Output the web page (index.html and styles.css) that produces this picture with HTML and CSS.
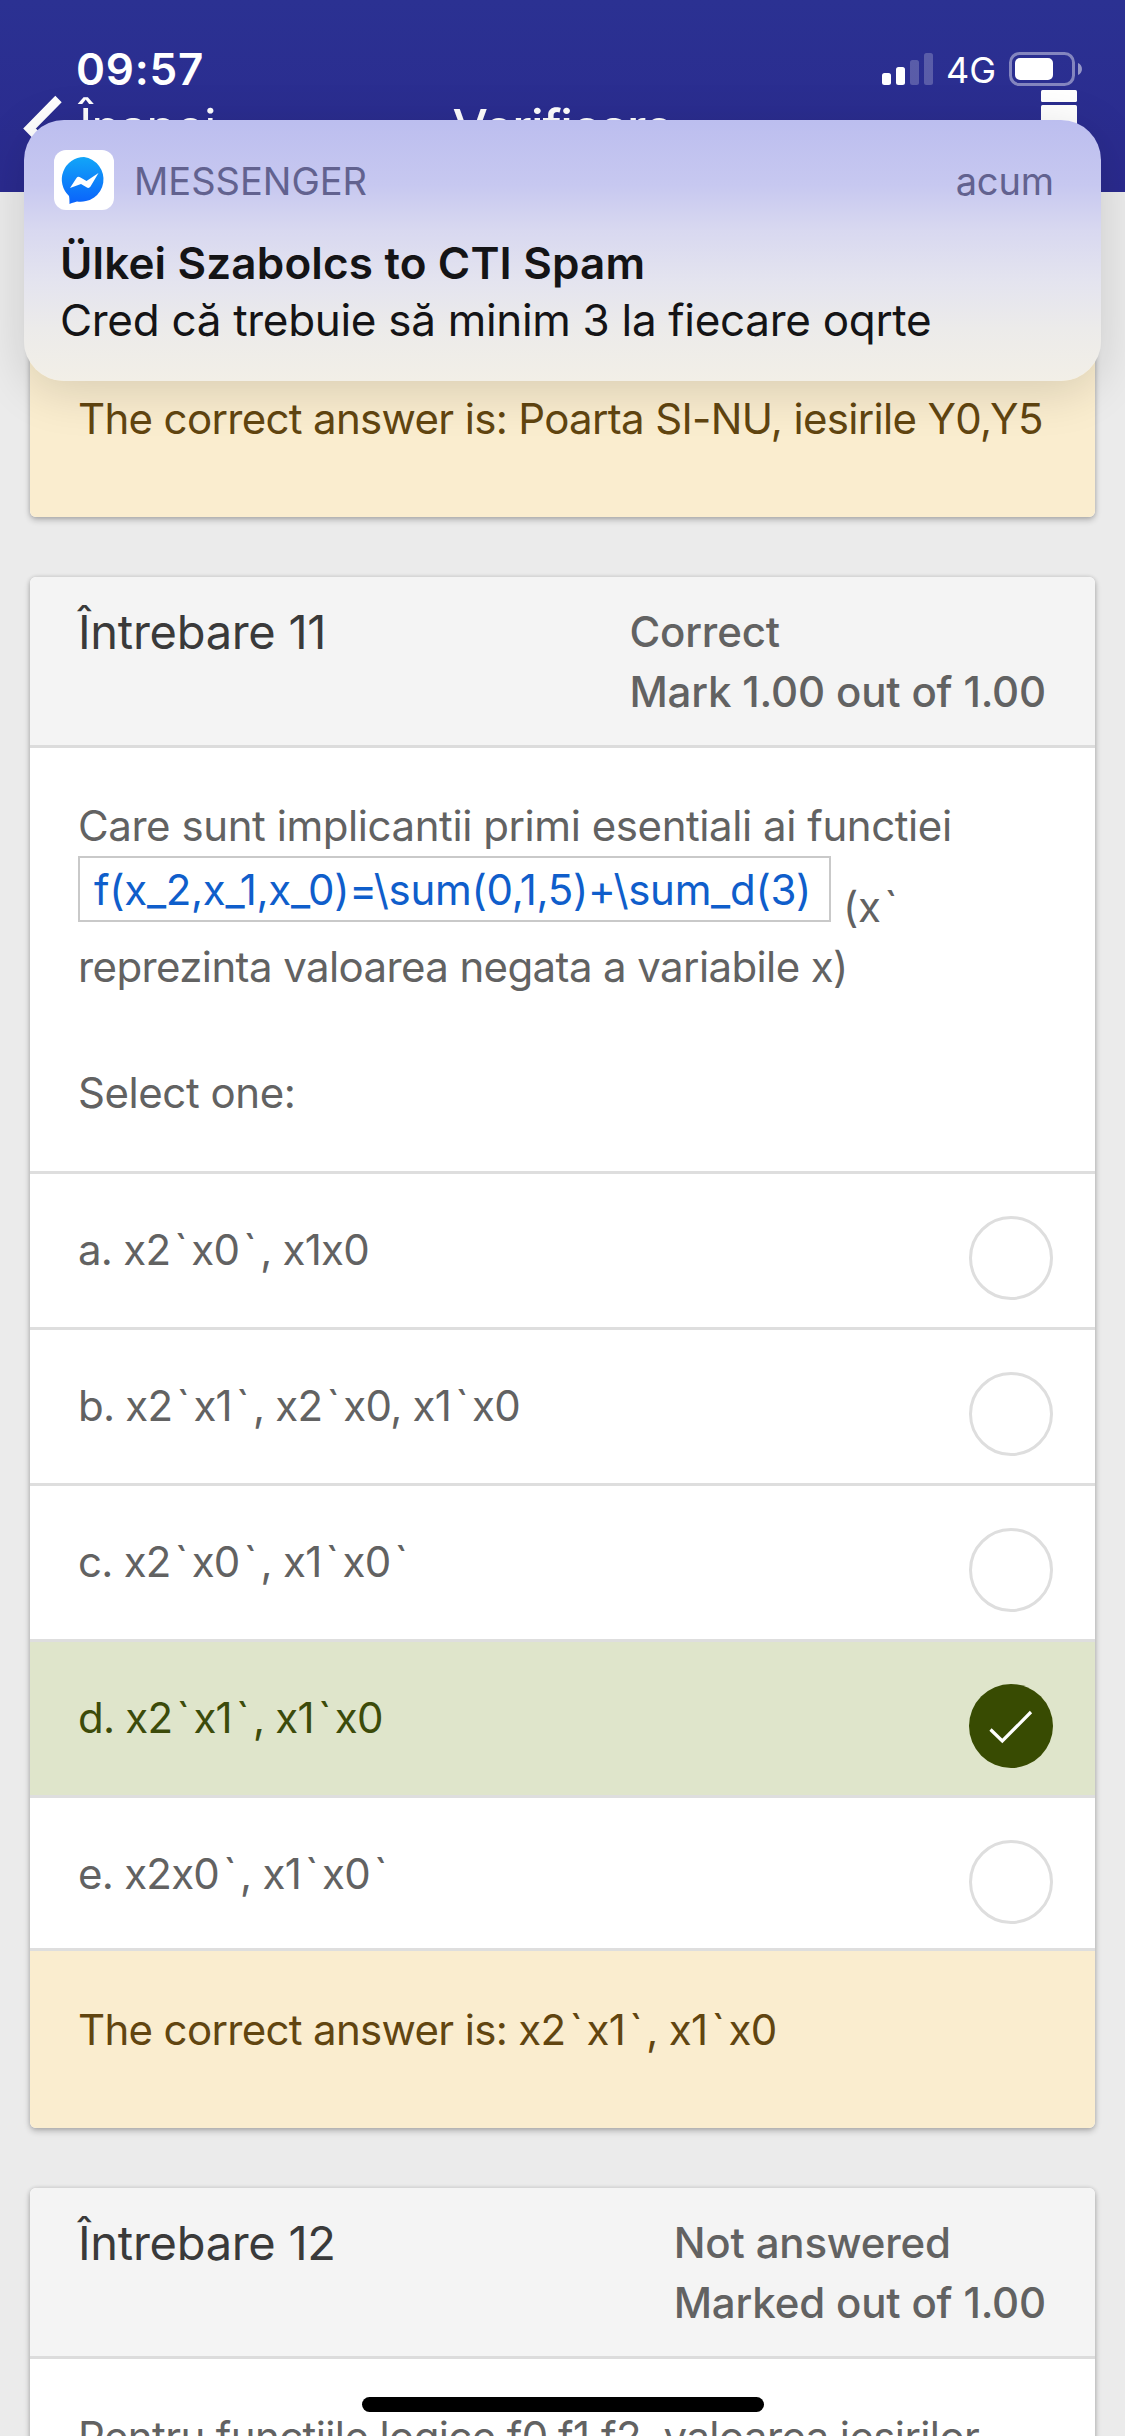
FILE: index.html
```html
<!DOCTYPE html>
<html lang="ro">
<head>
<meta charset="utf-8">
<title>Verificare</title>
<link rel="stylesheet" href="styles.css">
</head>
<body>
<div class="screen">
  <header class="navbar">
    <a class="back">
      <svg class="back-icon" width="42" height="70" viewBox="0 0 42 70"><path d="M38.500 5 9.500 34.500 38.500 64" fill="none" stroke="#fff" stroke-width="9"/></svg>
      <span class="back-label">Înapoi</span>
    </a>
    <span class="nav-title">Verificare</span>
    <svg class="nav-action" width="36" height="60" viewBox="0 0 36 60" fill="#fff"><rect width="36" height="12" rx="1.500"/><rect y="15" width="36" height="45" rx="1.500"/></svg>
  </header>

  <div class="statusbar">
    <span class="clock">09:57</span>
    <div class="status-icons">
      <svg width="51" height="32" viewBox="0 0 51 32" fill="#fff"><rect y="20" width="9" height="12" rx="2.500"/><rect x="14" y="14" width="9" height="18" rx="2.500"/><g opacity=".22"><rect x="28" y="7" width="9" height="25" rx="2.500"/><rect x="42" width="9" height="32" rx="2.500"/></g></svg>
      <span class="network">4G</span>
      <svg class="battery" width="74" height="34" viewBox="0 0 74 34"><rect x="1.500" y="1.500" width="63" height="31" rx="9" fill="none" stroke="#fff" stroke-opacity=".42" stroke-width="3"/><rect x="6" y="6" width="38" height="22" rx="5" fill="#fff"/><path d="M69 11c5.300 2 5.300 10 0 12z" fill="#fff" fill-opacity=".5"/></svg>
    </div>
  </div>

  <main class="content">
    <section class="card card-previous">
      <div class="feedback"><p>The correct answer is: Poarta SI-NU, iesirile Y0,Y5</p></div>
    </section>

    <section class="card">
      <div class="card-head">
        <h2>Întrebare 11</h2>
        <div class="grade"><span>Correct</span><span>Mark 1.00 out of 1.00</span></div>
      </div>
      <div class="question">
        <p>Care sunt implicantii primi esentiali ai functiei</p>
        <div class="formula-row"><span class="formula">f(x_2,x_1,x_0)=\sum(0,1,5)+\sum_d(3)</span><span class="after-formula">(x<span class="tick">`</span></span></div>
        <p class="tight">reprezinta valoarea negata a variabile x)</p>
        <p class="prompt">Select one:</p>
      </div>
      <ul class="answers">
        <li class="answer"><span class="label">a. x2<span class="tick">`</span>x0<span class="tick">`</span>, x1x0</span><i class="radio"></i></li>
        <li class="answer"><span class="label">b. x2<span class="tick">`</span>x1<span class="tick">`</span>, x2<span class="tick">`</span>x0, x1<span class="tick">`</span>x0</span><i class="radio"></i></li>
        <li class="answer"><span class="label">c. x2<span class="tick">`</span>x0<span class="tick">`</span>, x1<span class="tick">`</span>x0<span class="tick">`</span></span><i class="radio"></i></li>
        <li class="answer answer-correct"><span class="label">d. x2<span class="tick">`</span>x1<span class="tick">`</span>, x1<span class="tick">`</span>x0</span><svg class="check" width="84" height="84" viewBox="0 0 84 84"><circle cx="42" cy="42" r="42" fill="#384b02"/><path d="M21.500 45.500 33.300 57 62 28" fill="none" stroke="#fff" stroke-width="3.200"/></svg></li>
        <li class="answer"><span class="label">e. x2x0<span class="tick">`</span>, x1<span class="tick">`</span>x0<span class="tick">`</span></span><i class="radio"></i></li>
      </ul>
      <div class="feedback"><p>The correct answer is: x2<span class="tick">`</span>x1<span class="tick">`</span>, x1<span class="tick">`</span>x0</p></div>
    </section>

    <section class="card">
      <div class="card-head">
        <h2>Întrebare 12</h2>
        <div class="grade"><span>Not answered</span><span>Marked out of 1.00</span></div>
      </div>
      <div class="question">
        <p class="tight">Pentru functiile logice f0,f1,f2, valoarea iesirilor</p>
      </div>
    </section>
  </main>

  <aside class="notification">
    <div class="notification-head">
      <svg width="60" height="60" viewBox="0 0 60 60"><defs><linearGradient id="bubble" x1="0" y1="0" x2="0" y2="1"><stop offset="0" stop-color="#12a6f8"/><stop offset="1" stop-color="#0a62fb"/></linearGradient></defs><rect width="60" height="60" rx="12" fill="#fff"/><path d="M30 7a23 22.500 0 1 1-7 44.500c-2 .500-4 1-7.500 2.500 0-3 0-5-.500-8A22.500 22.500 0 0 1 30 7z" fill="url(#bubble)"/><path d="M16 38 22.500 28q1.500-2 4-.500l6 3.500 12-8-8 13.500q-1.500 2.300-4 .800L27 34z" fill="#fff"/></svg>
      <span class="app">MESSENGER</span>
      <span class="when">acum</span>
    </div>
    <strong class="sender">Ülkei Szabolcs to CTI Spam</strong>
    <span class="message">Cred că trebuie să minim 3 la fiecare oqrte</span>
  </aside>
  <div class="home-indicator"></div>
</div>
</body>
</html>
```
FILE: styles.css
```css
* { box-sizing: border-box; }
body { margin: 0; font-family: Inter, "Liberation Sans", sans-serif; font-size: 42px; line-height: 60px; color: #626262; }
h2, p, ul { margin: 0; padding: 0; font-weight: 400; }
.screen { position: relative; width: 1125px; height: 2436px; overflow: hidden; background: #ebebeb; white-space: nowrap; }

.navbar { display: grid; grid-template-columns: 1fr auto 1fr; height: 192px; padding-top: 90px; background: linear-gradient(#2b3192, #2a2a8e); color: #fff; font-size: 50px; letter-spacing: -.026em; }
.back { display: flex; }
.back-icon { margin: 4px 0 0 20px; }
.back-label { margin: 7px 0 0 17px; }
.nav-title { margin-top: 7px; font-weight: 500; letter-spacing: -.024em; }
.nav-action { justify-self: end; margin-right: 48px; }

.statusbar { position: absolute; top: 0; left: 0; display: flex; justify-content: space-between; width: 100%; padding: 39px 42px 0 76px; color: #fff; }
.clock { font-size: 44px; font-weight: 600; letter-spacing: .018em; }
.status-icons { display: flex; align-items: flex-start; padding-top: 13px; }
.status-icons svg { flex: none; margin-top: 1px; }
.status-icons .battery { margin-top: 0; }
.network { width: 76px; padding-left: 13px; font-size: 36px; line-height: 36px; }

.card { margin: 0 30px 60px; border-radius: 6px; overflow: hidden; background: #fff; box-shadow: 0 3px 6px rgba(0, 0, 0, .24), 0 0 4px rgba(0, 0, 0, .14); }
.card-head { display: flex; justify-content: space-between; height: 171px; padding: 25px 49px 0 48px; border-bottom: 3px solid #dcdcdc; background: #f4f4f4; }
.card-head h2 { font-size: 47px; letter-spacing: -.006em; color: #3a3a3a; }
.grade { display: flex; flex-direction: column; font-weight: 500; letter-spacing: -.004em; }
.question { padding: 48px; letter-spacing: -.0103em; }
.tight { letter-spacing: -.0145em; }
.formula-row { display: flex; align-items: flex-start; }
.formula { width: 753px; height: 66px; padding: 2px 14px; border: 2px solid #c9c9c9; letter-spacing: -.0072em; color: #0f5ecb; }
.after-formula { margin: 21px 0 0 12px; }
.prompt { margin-top: 66px; }
.tick { display: inline-block; width: 21px; text-align: center; }

.answers { list-style: none; border-top: 3px solid #dedede; }
.answer { display: flex; justify-content: space-between; align-items: flex-start; height: 156px; padding: 42px 42px 0 48px; border-bottom: 3px solid #dedede; letter-spacing: -.018em; }
.label { margin-top: 4px; }
.answer:last-child { height: 153px; }
.answer-correct { background: #dfe5cb; color: #3c4b0a; }
.radio { width: 84px; height: 84px; border: 3px solid #dedede; border-radius: 50%; }
.feedback { height: 177px; padding: 49px 48px 0; background: #faedcf; letter-spacing: -.0159em; color: #614510; }
.card-previous .feedback { height: 325px; padding-top: 197px; }

.notification { position: absolute; top: 120px; left: 24px; display: flex; flex-direction: column; width: 1077px; height: 261px; padding: 30px 47px 0 36px; border-radius: 40px; background: linear-gradient(#bcbeef, #c7c8f0 25%, #d8d8f0 42%, #e4e4ef 62%, #ecebea 80%, #f2efe7); box-shadow: 0 10px 50px rgba(0, 0, 0, .14); color: #141416; }
.notification-head { display: flex; align-items: flex-start; height: 85px; margin-left: -6px; color: #62628f; }
.app { margin: 1px auto 0 20px; font-size: 38px; }
.when { margin-top: 1px; font-size: 38px; letter-spacing: -.003em; }
.sender { font-size: 44px; line-height: 57px; font-weight: 600; letter-spacing: .0036em; }
.message { font-size: 44px; line-height: 57px; letter-spacing: -.0069em; }
.home-indicator { position: absolute; left: 362px; bottom: 24px; width: 402px; height: 15px; border-radius: 8px; background: #000; }
```
